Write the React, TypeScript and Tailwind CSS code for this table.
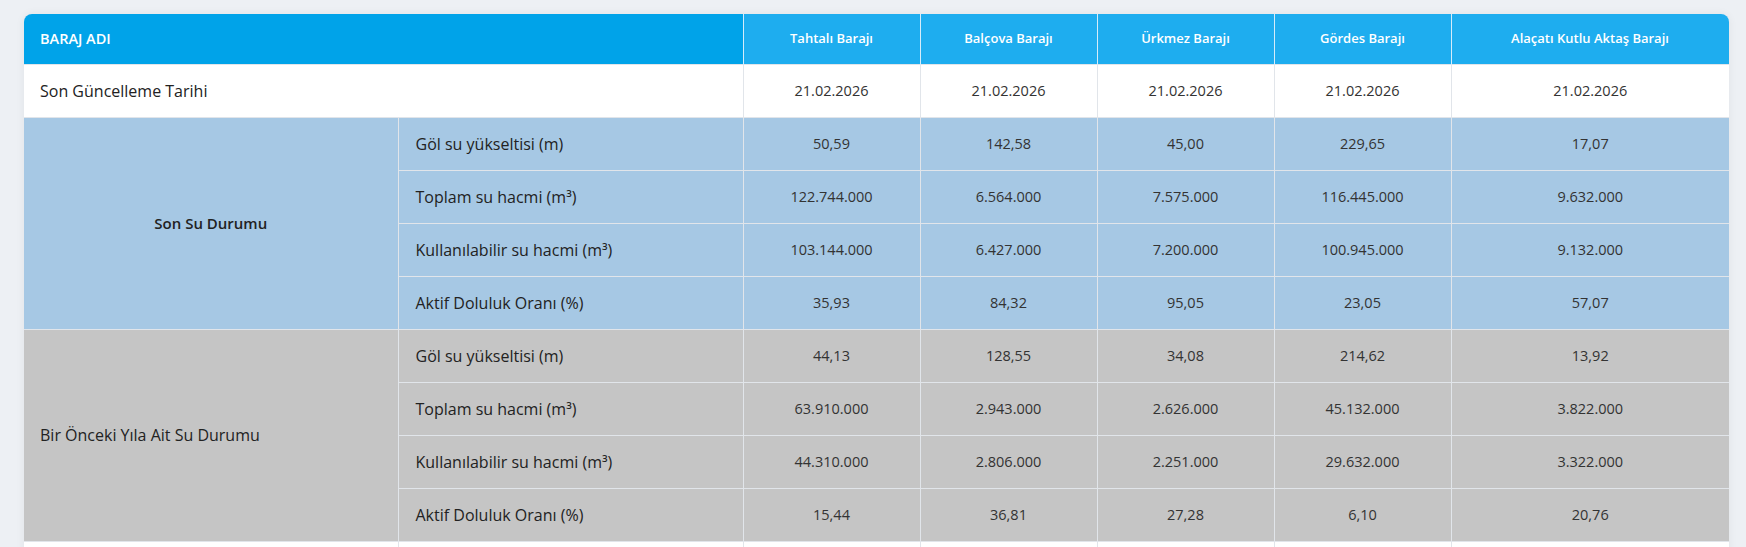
import React from "react";

const dams = ["Tahtalı Barajı", "Balçova Barajı", "Ürkmez Barajı", "Gördes Barajı", "Alaçatı Kutlu Aktaş Barajı"];

const labels = ["Göl su yükseltisi (m)", "Toplam su hacmi (m³)", "Kullanılabilir su hacmi (m³)", "Aktif Doluluk Oranı (%)"];

const current = [
  ["50,59", "142,58", "45,00", "229,65", "17,07"],
  ["122.744.000", "6.564.000", "7.575.000", "116.445.000", "9.632.000"],
  ["103.144.000", "6.427.000", "7.200.000", "100.945.000", "9.132.000"],
  ["35,93", "84,32", "95,05", "23,05", "57,07"],
];

const previous = [
  ["44,13", "128,55", "34,08", "214,62", "13,92"],
  ["63.910.000", "2.943.000", "2.626.000", "45.132.000", "3.822.000"],
  ["44.310.000", "2.806.000", "2.251.000", "29.632.000", "3.322.000"],
  ["15,44", "36,81", "27,28", "6,10", "20,76"],
];

const cellB = "border border-[#e1e5ea]";

export default function App() {
  return (
    <div
      className="min-h-[547px] w-full bg-[#edf0f4] pt-[14px] pl-[24px]"
      style={{ fontFamily: "'Open Sans', 'Noto Sans', sans-serif" }}
    >
      <div className="w-[1705px] overflow-hidden rounded-t-[8px] shadow-[0_0_10px_rgba(0,0,0,0.06)]">
        <table className="w-[1705px] table-fixed border-collapse text-[#222]">
          <colgroup>
            <col className="w-[374px]" />
            <col className="w-[345px]" />
            <col className="w-[177px]" />
            <col className="w-[177px]" />
            <col className="w-[177px]" />
            <col className="w-[177px]" />
            <col className="w-[278px]" />
          </colgroup>
          <thead>
            <tr className="h-[50px]">
              <th
                colSpan={2}
                className="border-0 bg-[#00a3e9] pl-[16px] text-left text-[14.5px] font-semibold text-white"
              >
                BARAJ ADI
              </th>
              {dams.map((d) => (
                <th
                  key={d}
                  className="border-x border-y-0 border-[#d5ecfa] bg-[#1eadef] text-center text-[13px] font-semibold text-white"
                >
                  {d}
                </th>
              ))}
            </tr>
          </thead>
          <tbody className="text-[14.5px]">
            <tr className="h-[53px] bg-white">
              <td colSpan={2} className={`${cellB} border-l-0 pl-[16px] text-[16px]`}>
                Son Güncelleme Tarihi
              </td>
              {dams.map((d, i) => (
                <td key={d} className={`${cellB} text-center text-[#333] ${i === 4 ? "border-r-0" : ""}`}>
                  21.02.2026
                </td>
              ))}
            </tr>
            {current.map((row, r) => (
              <tr key={"c" + r} className="h-[53px] bg-[#a6c8e4]">
                {r === 0 && (
                  <td rowSpan={4} className={`${cellB} border-l-0 text-center text-[15px] font-semibold`}>
                    Son Su Durumu
                  </td>
                )}
                <td className={`${cellB} pl-[17px] text-[16px]`}>{labels[r]}</td>
                {row.map((v, i) => (
                  <td key={i} className={`${cellB} text-center text-[#333] ${i === 4 ? "border-r-0" : ""}`}>
                    {v}
                  </td>
                ))}
              </tr>
            ))}
            {previous.map((row, r) => (
              <tr key={"p" + r} className="h-[53px] bg-[#c5c5c5]">
                {r === 0 && (
                  <td rowSpan={4} className={`${cellB} border-l-0 pl-[16px] text-left text-[16px]`}>
                    Bir Önceki Yıla Ait Su Durumu
                  </td>
                )}
                <td className={`${cellB} pl-[17px] text-[16px]`}>{labels[r]}</td>
                {row.map((v, i) => (
                  <td key={i} className={`${cellB} text-center text-[#333] ${i === 4 ? "border-r-0" : ""}`}>
                    {v}
                  </td>
                ))}
              </tr>
            ))}
            <tr className="h-[53px] bg-white">
              <td className={`${cellB} border-l-0`}></td>
              <td className={cellB}></td>
              {dams.map((d, i) => (
                <td key={d} className={`${cellB} ${i === 4 ? "border-r-0" : ""}`}></td>
              ))}
            </tr>
          </tbody>
        </table>
      </div>
    </div>
  );
}
